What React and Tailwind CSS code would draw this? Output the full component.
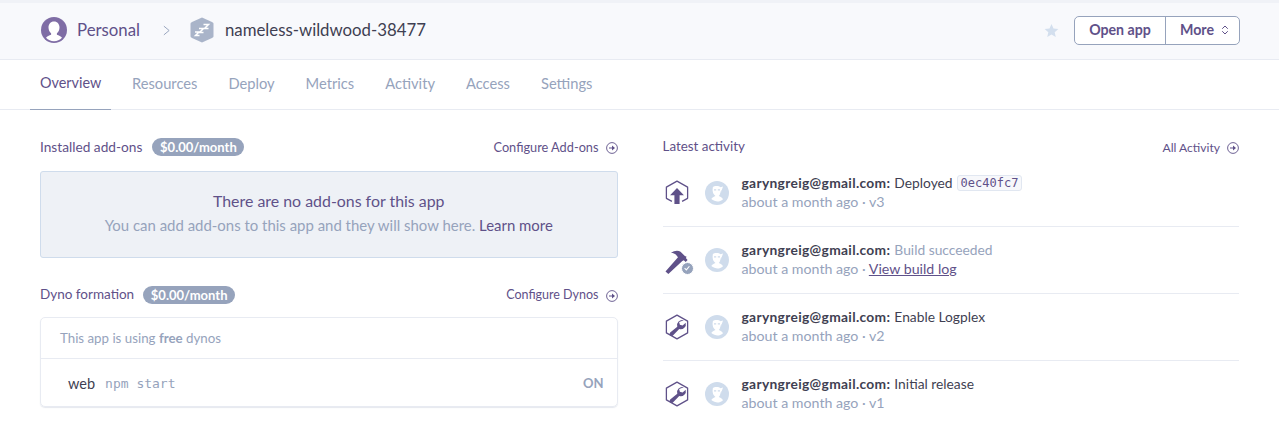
import { ChevronsUpDown } from "lucide-react"

const font = "font-['Lato','Open_Sans',sans-serif]"

const Bust = ({ className }) => (
  <svg viewBox="0 0 24 24" className={className}>
    <circle cx="12" cy="12" r="12" fill="#cfdcec" />
    <path d="M7.500 6.500c1.500-1.800 6.500-2 8-.2l2.500-.8-1.200 3.500-.8 2.500c-.3 1.500-1.200 2.800-2.300 3.500 1.800.6 3.300 1.500 4.300 3.200-1.500 1.500-4 2.300-5.500 2.300s-4.500-.8-6.200-2.400c.8-1.600 2.500-2.500 4.200-3.100-1.500-1-2.500-2.500-2.700-4.200-.2-1.500-.4-3 .2-4.300z" fill="#fff" />
    <path d="M9 8.800h2.200M12.800 8.800H15" stroke="#cfdcec" strokeWidth="1.200" />
    <path d="M16.500 9.500 15 14.500" stroke="#cfdcec" strokeWidth="0.900" />
  </svg>
)

const Wrench = () => (
  <svg viewBox="0 0 26 28" className="w-[24px] h-[26px]">
    <path d="M13 1.200 24.500 7.600v12.800L13 26.800 1.500 20.400V7.600z" fill="none" stroke="#5f5189" strokeWidth="1.400" strokeLinejoin="round" />
    <path d="M20.500 6.800a5.600 5.600 0 0 0-7.200 7L5.600 20a2.200 2.200 0 0 0 3 3.200l6.800-7a5.600 5.600 0 0 0 7-6.900l-3.300 3-3-.8-.8-2.800z" fill="#5f5189" />
  </svg>
)

const DeployIcon = () => (
  <svg viewBox="0 0 26 28" className="w-[24px] h-[26px]">
    <path d="M7.500 23 1.500 19.800V7.600L13 1.200l11.500 6.400v12.200L18.500 23" fill="none" stroke="#5f5189" strokeWidth="1.400" strokeLinejoin="round" />
    <path d="M13 8.500 20.500 16.500h-4.700v9.500h-5.600v-9.500H5.500z" fill="#5f5189" />
  </svg>
)

const BuildIcon = () => (
  <div className="relative w-[25px] h-[27px]">
    <svg viewBox="0 0 26 28" className="w-[25px] h-[27px]">
      <path d="M.5 25.500 13.500 10.500l-2.300-2.800c-1.200-1-3-1.700-5-1.500 3.500-2.800 7.500-3 10-1.300l4.500 4.500 1.800.8-.8 1.300 1.800 2-2 2-2-1.800-1.500.8L3.500 28z" fill="#5f5189" />
    </svg>
    <div className="absolute right-[-4px] bottom-[-1px] w-[13px] h-[13px] rounded-full bg-[#96a3bc] border border-white flex items-center justify-center">
      <svg viewBox="0 0 10 10" className="w-[8px] h-[8px]">
        <path d="M2 5.200 4.200 7.400 8 2.800" fill="none" stroke="#fff" strokeWidth="1.400" />
      </svg>
    </div>
  </div>
)

const ArrowCircle = () => (
  <svg viewBox="0 0 12 12" className="w-[12px] h-[12px] ml-[7px]">
    <circle cx="6" cy="6" r="5.400" fill="none" stroke="#5f5189" strokeWidth="0.900" />
    <path d="M3 5.400h3V3.500L9 6 6 8.500V6.600H3z" fill="#5f5189" />
  </svg>
)

const Price = ({ className }) => (
  <span className={`${className} h-[18px] w-[92px] text-center rounded-full bg-[#96a3bc] text-white text-[13px] font-bold leading-[18px]`}>$0.00/month</span>
)

const tabs = ["Overview", "Resources", "Deploy", "Metrics", "Activity", "Access", "Settings"]

const activity = [
  { icon: <DeployIcon />, msg: "Deployed", hash: "0ec40fc7", sub: "v3" },
  { icon: <BuildIcon />, msg: "Build succeeded", muted: true, link: "View build log" },
  { icon: <Wrench />, msg: "Enable Logplex", sub: "v2" },
  { icon: <Wrench />, msg: "Initial release", sub: "v1" },
]

export default function App() {
  return (
    <div className={`${font} w-[1279px] h-[432px] overflow-hidden bg-white text-[#5f5189]`}>
      <header className="h-[60px] pb-[2px] bg-[#f8f9fc] border-b border-[#e8ebf2] border-t-[3px] border-t-[#f0f2f7] flex items-center pl-[41px] pr-[39px]">
        <svg viewBox="0 0 26 26" className="w-[26px] h-[26px]">
          <circle cx="13" cy="13" r="13" fill="#7f6da5" />
          <path d="M13 4.500c3.500 0 5.500 2.700 5.500 6 0 2.500-1.200 4.700-2.600 5.800v1.500c2 .8 4 1.500 5.100 2.900a11 11 0 0 1-16 0c1.100-1.400 3.100-2.100 5.100-2.900v-1.500c-1.400-1.100-2.600-3.300-2.600-5.800 0-3.300 2-6 5.500-6z" fill="#fff" />
        </svg>
        <span className="ml-[10px] text-[16.800px]">Personal</span>
        <svg viewBox="0 0 8 12" className="ml-[23px] w-[7px] h-[11px]">
          <path d="M1 1l6 5-6 5" fill="none" stroke="#96a3bc" strokeWidth="1.100" />
        </svg>
        <svg viewBox="0 0 24 26" className="ml-[20px] w-[24px] h-[26px]">
          <path d="M12 .5 22 5c1 .5 1.500 1 1.500 2v12c0 1-.5 1.500-1.500 2l-10 4.500L2 21c-1-.5-1.500-1-1.500-2V7c0-1 .5-1.500 1.500-2z" fill="#a9b4c9" />
          <path d="M13.500 7.500h5l-4 4h4M9 11.500h4.500l-4 4h4M5 15h4l-3.500 3.500h4" fill="none" stroke="#fff" strokeWidth="1.500" />
        </svg>
        <span className="ml-[11px] text-[16.800px] text-[#3f3f52]">nameless-wildwood-38477</span>
        <svg viewBox="0 0 24 24" className="ml-auto w-[15px] h-[15px]">
          <path d="M12 1.500 15.200 8.700l7.800.8-5.900 5.200 1.700 7.700L12 18.400l-6.800 4 1.700-7.700L1 9.500l7.800-.8z" fill="#d3dfee" />
        </svg>
        <div className="ml-[15px] flex h-[29px] rounded-[5px] border border-[#96a3bc] bg-white text-[14.200px] font-bold">
          <span className="w-[91px] flex items-center justify-center border-r border-[#96a3bc]">Open app</span>
          <span className="w-[73px] flex items-center pl-[14px] gap-[5px]">
            More
            <ChevronsUpDown size={12} strokeWidth={2} />
          </span>
        </div>
      </header>

      <nav className="h-[50px] border-b border-[#e8ebf2] flex pl-[30px] text-[14.700px] text-[#96a3bc]">
        {tabs.map((t, i) => (
          <a key={t} className={`h-[50px] pb-[3px] flex items-center ${i === 0 ? "w-[81px] pl-[10px] mr-[11px] text-[14.400px] text-[#5f5189] border-b border-[#96a3bc]" : "px-[10px] mr-[11px]"}`}>
            {t}
          </a>
        ))}
      </nav>

      <main className="flex px-[40px] pt-[26px] gap-[45px]">
        <section className="w-[578px]">
          <div className="h-[22px] flex items-center text-[13.700px]">
            Installed add-ons
            <Price className="ml-[10px]" />
            <a className="ml-auto pt-[2px] flex items-center text-[12.750px]">
              Configure Add-ons
              <ArrowCircle />
            </a>
          </div>
          <div className="mt-[13px] h-[87px] pb-[4px] rounded-[3px] bg-[#eef1f6] border border-[#cfdcec] flex flex-col items-center justify-center">
            <p className="text-[15.900px] leading-[24px]">There are no add-ons for this app</p>
            <p className="text-[14.950px] leading-[24px] text-[#96a3bc]">
              You can add add-ons to this app and they will show here. <span className="text-[#5f5189]">Learn more</span>
            </p>
          </div>
          <div className="mt-[26px] h-[22px] flex items-center text-[13.500px]">
            <span className="pb-[2px]">Dyno formation</span>
            <Price className="ml-[9px]" />
            <a className="ml-auto pt-[1px] flex items-center text-[12.500px]">
              Configure Dynos
              <ArrowCircle />
            </a>
          </div>
          <div className="mt-[11px] rounded-[5px] border border-[#e8ebf2] shadow-[0_1px_1px_rgba(150,163,188,0.25)]">
            <div className="h-[41px] pt-[2px] flex items-center pl-[19px] text-[13.300px] text-[#96a3bc] border-b border-[#e8ebf2]">
              <span>This app is using <b className="font-bold">free</b> dynos</span>
            </div>
            <div className="h-[47px] pt-[2px] flex items-center pl-[27px] pr-[13px]">
              <span className="text-[14.500px] text-[#3f3f52]">web</span>
              <span className="ml-[10px] text-[13px] text-[#96a3bc] font-['DejaVu_Sans_Mono',monospace]">npm start</span>
              <span className="ml-auto text-[13px] font-bold text-[#96a3bc]">ON</span>
            </div>
          </div>
        </section>

        <section className="w-[577px]">
          <div className="h-[22px] flex items-center text-[13.400px]">
            <span className="pb-[2px]">Latest activity</span>
            <a className="ml-auto pt-[2px] flex items-center text-[12.100px]">
              All Activity
              <ArrowCircle />
            </a>
          </div>
          <ul className="mt-[2px]">
            {activity.map((a, i) => (
              <li key={i} className={`h-[67px] flex items-center border-b ${i < 3 ? "border-[#e8ebf2]" : "border-transparent"}`}>
                <div className="w-[27px] ml-[1px] flex justify-center">{a.icon}</div>
                <Bust className="ml-[14px] w-[24px] h-[24px]" />
                <div className="ml-[13px] pb-[2px] text-[13.800px] leading-[19px]">
                  <div className="text-[#3f3f52] flex items-center">
                    <b className="font-bold tracking-[0.320px]">garyngreig@gmail.com:</b>
                    <span className={`ml-[4px] ${a.muted ? "text-[#96a3bc]" : ""}`}>{a.msg}</span>
                    {a.hash && (
                      <code className="ml-[4px] px-[3px] h-[16px] leading-[15px] rounded-[3px] border border-[#e1e7f1] bg-[#f7f8fb] text-[12px] text-[#5f5189] font-['DejaVu_Sans_Mono',monospace]">{a.hash}</code>
                    )}
                  </div>
                  <div className="text-[#96a3bc] text-[14.200px]">
                    about a month ago · {a.link ? <a className="underline text-[#5f5189]">{a.link}</a> : a.sub}
                  </div>
                </div>
              </li>
            ))}
          </ul>
        </section>
      </main>
    </div>
  )
}
